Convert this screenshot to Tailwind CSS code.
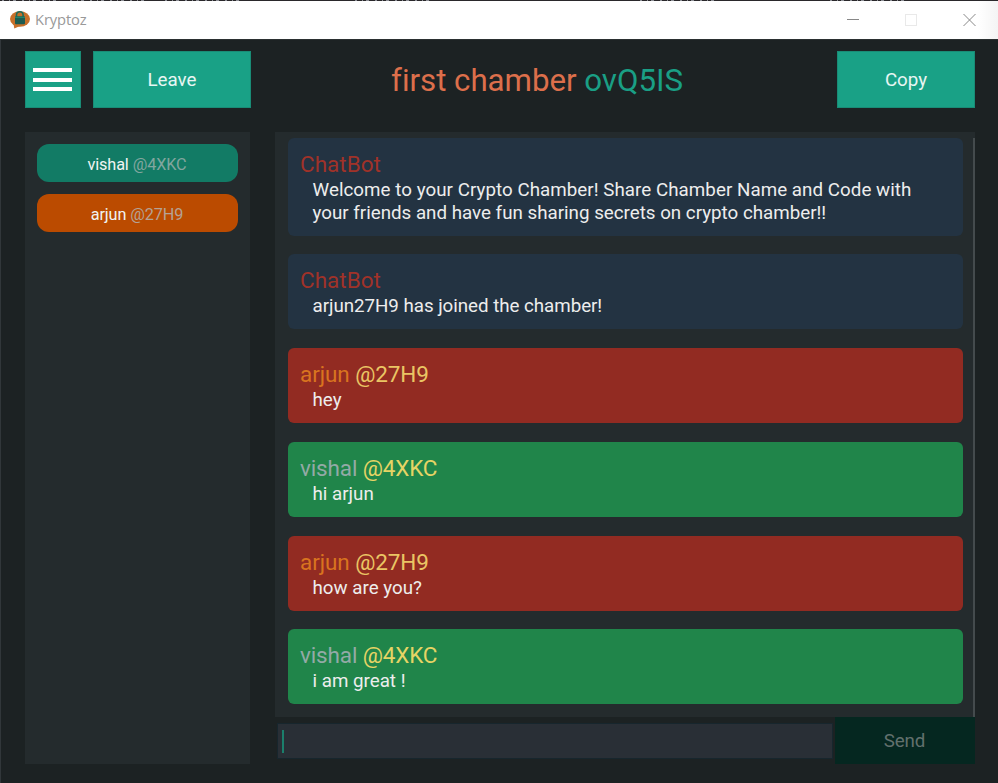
<!DOCTYPE html>
<html lang="en">
<head>
<meta charset="utf-8">
<title>Kryptoz</title>
<script src="https://cdn.jsdelivr.net/npm/@tailwindcss/browser@4"></script>
</head>
<body class="w-[998px] h-[783px] overflow-hidden flex flex-col bg-[#1c2223] font-['Roboto','Liberation_Sans',sans-serif] [font-variant-ligatures:none]">
<svg class="block w-[998px] h-px shrink-0 bg-[#2a282b]" viewBox="0 0 998 1"><path d="M2 .5h58M70 .5h80M165 .5h78M355 .5h80M640 .5h80M830 .5h78" stroke="#8d8f96" stroke-dasharray="2 5 1 3 3 6"/></svg>
<header class="h-[38px] shrink-0 flex items-center bg-linear-to-r from-white from-98% to-[#f4f4f4] pl-[9px] pr-[22px]">
  <svg class="w-[22px] h-[20px]" viewBox="0 0 22 20">
    <ellipse cx="11" cy="9" rx="10" ry="7.800" fill="#c7702a"/>
    <path d="M4.500 14 5.300 18.500 11 16z" fill="#c7702a"/>
    <path d="M7.500 7V5a3.300 3.300 0 0 1 6.600 0V7" fill="none" stroke="#1d6b5b" stroke-width="1.600"/>
    <rect x="6" y="6.300" width="10" height="8" rx="1" fill="#1d5c50"/>
    <path d="M6 7.300h10" stroke="#238a71" stroke-width="1.200"/>
  </svg>
  <span class="ml-[4px] -mt-[2px] text-[14.700px] tracking-[-0.1px] leading-5 text-[#999] font-['Open_Sans',sans-serif]">Kryptoz</span>
  <div class="ml-auto flex items-center gap-[46px]">
    <svg class="w-[12px] h-[12px]" viewBox="0 0 12 12"><path d="M0 5.500h12" stroke="#888"/></svg>
    <svg class="w-[12px] h-[12px]" viewBox="0 0 12 12"><rect x=".5" y=".5" width="11" height="11" fill="none" stroke="#e9e9e9"/></svg>
    <svg class="w-[13px] h-[12px]" viewBox="0 0 13 12"><path d="M.5 0l12 12M12.500 0l-12 12" stroke="#888"/></svg>
  </div>
</header>
<main class="h-[744px] shrink-0 flex flex-col border-l border-t border-l-[#31373a] border-t-[#2b3031] pl-[24px] pr-[23px]">
  <div class="h-[92px] shrink-0 flex pt-[11px]">
    <button class="w-[56px] h-[56.500px] bg-[#19a186] border border-[#198c76] flex flex-col items-center justify-center gap-[5.700px] pr-px pt-px">
      <span class="block w-[39px] h-[4px] bg-white"></span>
      <span class="block w-[39px] h-[4px] bg-white"></span>
      <span class="block w-[39px] h-[4px] bg-white"></span>
    </button>
    <button class="ml-[12px] w-[158px] h-[56.500px] pt-px bg-[#19a186] border border-[#198c76] text-white/90 text-[18.750px]">Leave</button>
    <h1 class="flex-1 h-[56px] text-center text-[31.250px] leading-[60px] pr-[14px] tracking-[-0.03px] text-[#dc6f4b] whitespace-pre">first chamber <span class="text-[#1a9f85]">ovQ5IS</span></h1>
    <button class="w-[138px] h-[56.500px] pt-px bg-[#19a186] border border-[#198c76] text-white/90 text-[18.750px]">Copy</button>
  </div>
  <div class="h-[632px] shrink-0 flex gap-[25px]">
    <aside class="w-[225px] bg-[#242b2d] px-[12px] pt-[12px] flex flex-col gap-[12px] text-[16.250px] tracking-[-0.1px] text-[#f0f4f2] text-center">
      <div class="h-[38px] leading-[42px] pr-px rounded-[12px] bg-[#127b65]">vishal <span class="text-[#82a69f]">@4XKC</span></div>
      <div class="h-[38px] leading-[42px] pr-px rounded-[12px] bg-[#bb4b00]">arjun <span class="text-[#b5a294]">@27H9</span></div>
    </aside>
    <section class="w-[700px] flex flex-col">
      <div class="h-[585px] shrink-0 bg-[#242b2d] flex justify-between pl-[12.500px] pt-[6px]">
        <div class="w-[675px] flex flex-col gap-[18.750px] text-[18.750px] leading-[22.500px] text-[#ededed]">
          <article class="h-[97.500px] shrink-0 rounded-[6px] bg-[#233342] pl-[12.500px] pt-[13px]">
            <h2 class="text-[22.500px] leading-[27px] text-[#a03229]">ChatBot</h2>
            <p class="pt-px pl-[12.500px] w-[640px]"><span class="tracking-[0.045px]">Welcome to your Crypto Chamber! Share Chamber Name and Code with</span><br>your friends and have fun sharing secrets on crypto chamber!!</p>
          </article>
          <article class="h-[75px] shrink-0 rounded-[6px] bg-[#233342] pl-[12.500px] pt-[12.750px]">
            <h2 class="text-[22.500px] leading-[27px] text-[#a03229]">ChatBot</h2>
            <p class="pt-px pl-[12.500px] tracking-[-0.04px]">arjun27H9 has joined the chamber!</p>
          </article>
          <article class="h-[75px] shrink-0 rounded-[6px] bg-[#922b22] pl-[12.500px] pt-[13px]">
            <h2 class="text-[22.500px] leading-[27px] tracking-[-0.09px] text-[#d9741f]">arjun <span class="text-[#eac564]">@27H9</span></h2>
            <p class="pt-px pl-[12.500px]">hey</p>
          </article>
          <article class="h-[75px] shrink-0 rounded-[6px] bg-[#20854a] pl-[12.500px] pt-[13px]">
            <h2 class="text-[22.500px] leading-[27px] tracking-[-0.14px] text-[#93aaa6]">vishal <span class="text-[#e6d465]">@4XKC</span></h2>
            <p class="pt-px pl-[12.500px]">hi arjun</p>
          </article>
          <article class="h-[75px] shrink-0 rounded-[6px] bg-[#922b22] pl-[12.500px] pt-[13px]">
            <h2 class="text-[22.500px] leading-[27px] tracking-[-0.09px] text-[#d9741f]">arjun <span class="text-[#eac564]">@27H9</span></h2>
            <p class="pt-px pl-[12.500px]">how are you?</p>
          </article>
          <article class="h-[75px] shrink-0 rounded-[6px] bg-[#20854a] pl-[12.500px] pt-[13px]">
            <h2 class="text-[22.500px] leading-[27px] tracking-[-0.14px] text-[#93aaa6]">vishal <span class="text-[#e6d465]">@4XKC</span></h2>
            <p class="pt-px pl-[12.500px]">i am great !</p>
          </article>
        </div>
        <div class="w-[2px] bg-[#444b4d]"></div>
      </div>
      <div class="h-[47px] flex">
        <div class="ml-[2px] mt-[6px] w-[556px] h-[36px] bg-[#292f36] border border-[#17262d] flex items-center pl-[4px]"><span class="block w-[2px] h-[23px] bg-[#1b7f6c]"></span></div>
        <button class="ml-[2px] w-[140px] h-[47px] pt-[2px] pr-px bg-[#052720] text-[#62706d] text-[18.750px] tracking-[-0.1px]">Send</button>
      </div>
    </section>
  </div>
</main>
</body>
</html>
